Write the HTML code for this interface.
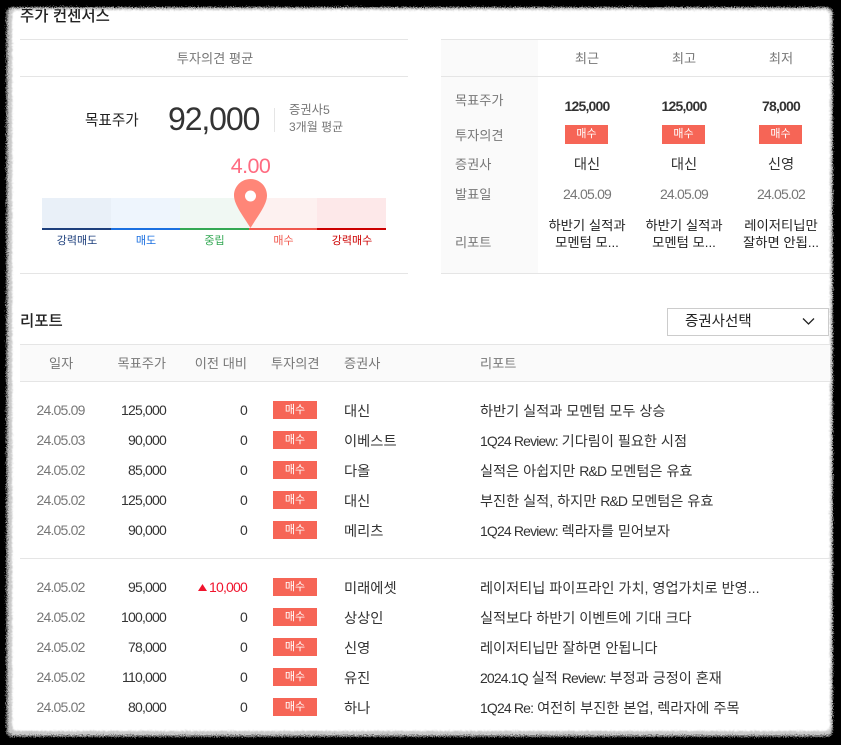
<!DOCTYPE html>
<html lang="ko"><head><meta charset="utf-8"><title>주가 컨센서스</title>
<style>
html,body{margin:0;padding:0;background:#000}
body{width:841px;height:745px;position:relative;overflow:hidden;font-family:"Liberation Sans","Noto Sans CJK KR",sans-serif;font-size:14px;color:#333}
svg.f{position:absolute;left:0;top:0}
.t{position:absolute;line-height:20px;height:20px;white-space:nowrap}
.c{transform:translateX(-50%)}
.r{transform:translateX(-100%)}
.n{letter-spacing:-.8px}
.g{color:#777}
.l{position:absolute;height:1px;background:#e5e5e5}
.b{position:absolute;background:#f66556;color:#fff;font-size:11px;text-align:center;line-height:18px}
.s{position:absolute;top:198px;height:30px}
.u{position:absolute;top:228px;height:2px}
.k{font-size:11px;margin-top:1px}
.h{color:#777;font-size:13.200px;margin-top:1px}
.p{font-size:14.200px;color:#333;margin-top:1px}
.pk{margin-top:2px}
.q{font-size:14.300px;color:#333;margin-top:2px}
.e{font-size:14px;letter-spacing:-.85px}
.w{font-size:13.300px;color:#222}
</style></head><body>
<svg class="f" width="841" height="745" viewBox="0 0 841 745">
<defs>
<filter id="a" x="-5%" y="-5%" width="110%" height="110%"><feTurbulence type="fractalNoise" baseFrequency=".9" numOctaves="2" seed="4"/><feDisplacementMap in="SourceGraphic" scale="6" xChannelSelector="R" yChannelSelector="G"/></filter>
<filter id="b" x="-5%" y="-5%" width="110%" height="110%"><feTurbulence type="fractalNoise" baseFrequency=".9" numOctaves="2" seed="7"/><feDisplacementMap in="SourceGraphic" scale="6" xChannelSelector="G" yChannelSelector="R"/></filter>
<filter id="d" x="-5%" y="-5%" width="110%" height="110%"><feTurbulence type="fractalNoise" baseFrequency=".9" numOctaves="2" seed="9"/><feDisplacementMap in="SourceGraphic" scale="5" xChannelSelector="G" yChannelSelector="R"/><feGaussianBlur stdDeviation=".4"/></filter>
</defs>
<rect x="6" y="7" width="827" height="730" rx="6" fill="#777" filter="url(#a)"/>
<rect x="8" y="8" width="824" height="727" rx="6" fill="#c8c8c8" filter="url(#b)"/>
<rect x="12" y="10" width="818" height="721" rx="5" fill="#fff" filter="url(#d)"/>
</svg>

<div class="t" style="left:20px;top:7px;font-size:15.500px;font-weight:500;color:#222;clip-path:inset(2px 0 0 0)">주가 컨센서스</div>
<div class="l" style="left:20px;top:39px;width:388px"></div>
<div class="l" style="left:20px;top:76px;width:388px"></div>
<div class="l" style="left:20px;top:273px;width:388px"></div>
<div class="t c h" style="left:215px;top:48px">투자의견 평균</div>

<div class="t" style="left:85px;top:111px;color:#222;font-size:14.600px">목표주가</div>
<div class="t" style="left:168px;top:99px;font-size:32px;line-height:40px;height:40px;color:#333;letter-spacing:-1.100px">92,000</div>
<div style="position:absolute;left:274px;top:108px;width:1px;height:24px;background:#e5e5e5"></div>
<div class="t g" style="left:289px;top:100px;font-size:12.300px">증권사5</div>
<div class="t g" style="left:289px;top:117px;font-size:12px">3개월 평균</div>

<div class="t c" style="left:250.500px;top:156px;font-size:21.500px;color:#ff6b81;letter-spacing:-.6px">4.00</div>
<div class="s" style="left:42px;width:69px;background:#e9f0f8"></div>
<div class="s" style="left:111px;width:69px;background:#eef5fd"></div>
<div class="s" style="left:180px;width:69px;background:#f0f8f3"></div>
<div class="s" style="left:249px;width:68px;background:#fdf1f0"></div>
<div class="s" style="left:317px;width:69px;background:#fde8e9"></div>
<div class="u" style="left:42px;width:69px;background:#1d3f7c"></div>
<div class="u" style="left:111px;width:69px;background:#1a6fe0"></div>
<div class="u" style="left:180px;width:69px;background:#33a853"></div>
<div class="u" style="left:249px;width:68px;background:#f0584e"></div>
<div class="u" style="left:317px;width:69px;background:#cc0000"></div>
<svg style="position:absolute;left:234px;top:179px" width="34" height="50" viewBox="0 0 34 50"><path fill="#ff8678" d="M16.500 0C7.400 0 0 7.300 0 16.500 0 26 10 38 16.500 49 23 38 33 26 33 16.500 33 7.300 25.600 0 16.500 0Z"/><circle cx="16.500" cy="17" r="5.500" fill="#fff"/></svg>
<div class="t c k" style="left:77px;top:230px;color:#1d3f7c">강력매도</div>
<div class="t c k" style="left:146px;top:230px;color:#1a6fe0">매도</div>
<div class="t c k" style="left:214.500px;top:230px;color:#33a853">중립</div>
<div class="t c k" style="left:283.500px;top:230px;color:#f0584e">매수</div>
<div class="t c k" style="left:352px;top:230px;color:#cc0000">강력매수</div>

<div style="position:absolute;left:441px;top:40px;width:97px;height:233px;background:#fafafa"></div>
<div class="l" style="left:441px;top:39px;width:389px"></div>
<div class="l" style="left:441px;top:76px;width:389px"></div>
<div class="l" style="left:441px;top:273px;width:389px"></div>
<div class="t c h" style="left:587px;top:48px">최근</div>
<div class="t c h" style="left:684px;top:48px">최고</div>
<div class="t c h" style="left:781px;top:48px">최저</div>
<div class="t h" style="left:455px;top:90px">목표주가</div>
<div class="t h" style="left:455px;top:125px">투자의견</div>
<div class="t h" style="left:455px;top:154px">증권사</div>
<div class="t h" style="left:455px;top:184px">발표일</div>
<div class="t h" style="left:455px;top:232px">리포트</div>

<div class="t c n" style="left:587px;top:96px;font-weight:bold;color:#333">125,000</div>
<div class="t c n" style="left:684px;top:96px;font-weight:bold;color:#333">125,000</div>
<div class="t c n" style="left:781px;top:96px;font-weight:bold;color:#333">78,000</div>
<div class="b" style="left:565px;top:125px;width:43px;height:19px">매수</div>
<div class="b" style="left:662px;top:125px;width:43px;height:19px">매수</div>
<div class="b" style="left:759px;top:125px;width:43px;height:19px">매수</div>
<div class="t c q" style="left:587px;top:153px">대신</div>
<div class="t c q" style="left:684px;top:153px">대신</div>
<div class="t c q" style="left:781px;top:153px">신영</div>
<div class="t c n g" style="left:587px;top:184px">24.05.09</div>
<div class="t c n g" style="left:684px;top:184px">24.05.09</div>
<div class="t c n g" style="left:781px;top:184px">24.05.02</div>
<div class="t c w" style="left:587px;top:216px">하반기 실적과</div>
<div class="t c w" style="left:587px;top:233px">모멘텀 모...</div>
<div class="t c w" style="left:684px;top:216px">하반기 실적과</div>
<div class="t c w" style="left:684px;top:233px">모멘텀 모...</div>
<div class="t c w" style="left:781px;top:216px">레이저티닙만</div>
<div class="t c w" style="left:781px;top:233px">잘하면 안됩...</div>

<div class="t" style="left:20px;top:312px;font-size:15.500px;font-weight:500;color:#222">리포트</div>
<div style="position:absolute;left:667px;top:308px;width:160px;height:26px;border:1px solid #ccc;background:#fff"></div>
<div class="t" style="left:685px;top:312px;font-size:14.500px;color:#222">증권사선택</div>
<svg style="position:absolute;left:802px;top:317px" width="14" height="9" viewBox="0 0 14 9"><path d="M1 1.500 6.500 7 12 1.500" fill="none" stroke="#222" stroke-width="1.300"/></svg>

<div style="position:absolute;left:20px;top:344px;width:810px;height:37px;background:#fafafa"></div>
<div class="l" style="left:20px;top:344px;width:810px"></div>
<div class="l" style="left:20px;top:381px;width:810px"></div>
<div class="t h" style="left:49px;top:353px">일자</div>
<div class="t h r" style="left:166px;top:353px">목표주가</div>
<div class="t h r" style="left:247px;top:353px">이전 대비</div>
<div class="t h" style="left:271px;top:353px">투자의견</div>
<div class="t h" style="left:344px;top:353px">증권사</div>
<div class="t h" style="left:480px;top:353px">리포트</div>

<div class="t n g" style="left:36.500px;top:400px">24.05.09</div><div class="t n r" style="left:166px;top:400px">125,000</div><div class="t n r" style="left:247px;top:400px">0</div><div class="b" style="left:273px;top:401px;width:44px;height:18px">매수</div><div class="t q" style="left:344px;top:400px">대신</div><div class="t p pk" style="left:480px;top:400px">하반기 실적과 모멘텀 모두 상승</div>
<div class="t n g" style="left:36.500px;top:430px">24.05.03</div><div class="t n r" style="left:166px;top:430px">90,000</div><div class="t n r" style="left:247px;top:430px">0</div><div class="b" style="left:273px;top:431px;width:44px;height:18px">매수</div><div class="t q" style="left:344px;top:430px">이베스트</div><div class="t p" style="left:480px;top:430px"><span class="e">1Q24 Review:</span> 기다림이 필요한 시점</div>
<div class="t n g" style="left:36.500px;top:460px">24.05.02</div><div class="t n r" style="left:166px;top:460px">85,000</div><div class="t n r" style="left:247px;top:460px">0</div><div class="b" style="left:273px;top:461px;width:44px;height:18px">매수</div><div class="t q" style="left:344px;top:460px">다올</div><div class="t p" style="left:480px;top:460px">실적은 아쉽지만 <span class="e">R&amp;D</span> 모멘텀은 유효</div>
<div class="t n g" style="left:36.500px;top:490px">24.05.02</div><div class="t n r" style="left:166px;top:490px">125,000</div><div class="t n r" style="left:247px;top:490px">0</div><div class="b" style="left:273px;top:491px;width:44px;height:18px">매수</div><div class="t q" style="left:344px;top:490px">대신</div><div class="t p" style="left:480px;top:490px">부진한 실적, 하지만 <span class="e">R&amp;D</span> 모멘텀은 유효</div>
<div class="t n g" style="left:36.500px;top:520px">24.05.02</div><div class="t n r" style="left:166px;top:520px">90,000</div><div class="t n r" style="left:247px;top:520px">0</div><div class="b" style="left:273px;top:521px;width:44px;height:18px">매수</div><div class="t q" style="left:344px;top:520px">메리츠</div><div class="t p" style="left:480px;top:520px"><span class="e">1Q24 Review:</span> 렉라자를 믿어보자</div>

<div class="l" style="left:20px;top:558px;width:810px"></div>

<div class="t n g" style="left:36.500px;top:577px">24.05.02</div><div class="t n r" style="left:166px;top:577px">95,000</div><svg style="position:absolute;left:198px;top:584px" width="9" height="7" viewBox="0 0 9 7"><path d="M4.500 0 9 7H0Z" fill="#f0142d"/></svg><div class="t n r" style="left:247px;top:577px;color:#f0142d">10,000</div><div class="b" style="left:273px;top:578px;width:44px;height:18px">매수</div><div class="t q" style="left:344px;top:577px">미래에셋</div><div class="t p pk" style="left:480px;top:577px">레이저티닙 파이프라인 가치, 영업가치로 반영...</div>
<div class="t n g" style="left:36.500px;top:607px">24.05.02</div><div class="t n r" style="left:166px;top:607px">100,000</div><div class="t n r" style="left:247px;top:607px">0</div><div class="b" style="left:273px;top:608px;width:44px;height:18px">매수</div><div class="t q" style="left:344px;top:607px">상상인</div><div class="t p pk" style="left:480px;top:607px">실적보다 하반기 이벤트에 기대 크다</div>
<div class="t n g" style="left:36.500px;top:637px">24.05.02</div><div class="t n r" style="left:166px;top:637px">78,000</div><div class="t n r" style="left:247px;top:637px">0</div><div class="b" style="left:273px;top:638px;width:44px;height:18px">매수</div><div class="t q" style="left:344px;top:637px">신영</div><div class="t p pk" style="left:480px;top:637px">레이저티닙만 잘하면 안됩니다</div>
<div class="t n g" style="left:36.500px;top:667px">24.05.02</div><div class="t n r" style="left:166px;top:667px">110,000</div><div class="t n r" style="left:247px;top:667px">0</div><div class="b" style="left:273px;top:668px;width:44px;height:18px">매수</div><div class="t q" style="left:344px;top:667px">유진</div><div class="t p" style="left:480px;top:667px"><span class="e">2024.1Q</span> 실적 <span class="e">Review:</span> 부정과 긍정이 혼재</div>
<div class="t n g" style="left:36.500px;top:697px">24.05.02</div><div class="t n r" style="left:166px;top:697px">80,000</div><div class="t n r" style="left:247px;top:697px">0</div><div class="b" style="left:273px;top:698px;width:44px;height:18px">매수</div><div class="t q" style="left:344px;top:697px">하나</div><div class="t p" style="left:480px;top:697px"><span class="e">1Q24 Re:</span> 여전히 부진한 본업, 렉라자에 주목</div>
</body></html>
